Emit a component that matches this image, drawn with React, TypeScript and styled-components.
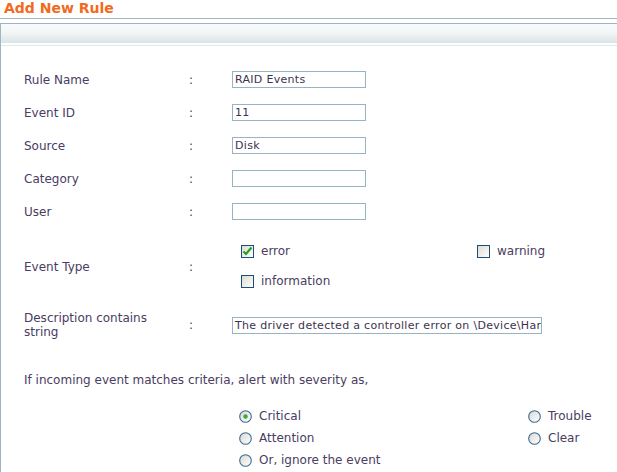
import React from "react";
import styled, { createGlobalStyle } from "styled-components";

const Global = createGlobalStyle`
  html, body { margin: 0; padding: 0; background: #ffffff; }
  body { font-family: "DejaVu Sans", Verdana, sans-serif; color: #4a3c62; }
  * { box-sizing: border-box; }
`;

const Page = styled.div`
  width: 617px;
  height: 472px;
  overflow: hidden;
  background: #fff;
`;

const Title = styled.h1`
  margin: 0;
  height: 19px;
  padding: 0 0 0 4px;
  font-size: 14px;
  line-height: 17px;
  font-weight: bold;
  color: #f26a21;
  border-bottom: 1px solid #a2b6c2;
`;

const Panel = styled.div`
  margin-top: 4px;
  border-top: 1px solid #9db5c5;
  border-left: 1px solid #9db5c5;
  min-height: 460px;
`;

const PanelHeader = styled.div`
  height: 22px;
  background: linear-gradient(#f8fafb 0%, #f3f6f7 40%, #d6e0e4 100%);
  border-bottom: 1px solid #dfe7ea;
  box-shadow: inset 0 -2px 0 #ffffff;
`;

const Form = styled.div`
  padding: 17px 0 0 23px;
`;

const Row = styled.div<{ $h: number }>`
  display: grid;
  grid-template-columns: 165px 43px 1fr;
  align-items: center;
  height: ${(p) => p.$h}px;
  font-size: 12px;
  line-height: 14px;
`;

const Label = styled.div<{ $shift?: number }>`
  width: 150px;
  padding-top: ${(p) => p.$shift ?? 0}px;
`;

const Colon = styled.div<{ $shift?: number }>`
  padding-top: ${(p) => p.$shift ?? 0}px;
`;

const TextInput = styled.div<{ $w: number }>`
  width: ${(p) => p.$w}px;
  height: 17px;
  border: 1px solid #98b3c1;
  padding: 0 0 0 2px;
  font-size: 11px;
  letter-spacing: 0.3px;
  line-height: 15px;
  color: #3c3350;
  white-space: nowrap;
  overflow: hidden;
  background: #fff;
`;

const CheckGrid = styled.div`
  display: grid;
  grid-template-columns: 236px auto;
  grid-auto-rows: 30px;
  align-items: center;
  padding: 8px 0 1px 9px;
`;

const OptionItem = styled.div`
  display: flex;
  align-items: center;
  gap: 7px;
  font-size: 12px;
`;

const Box = styled.span`
  display: inline-flex;
  width: 13px;
  height: 13px;
  border: 1px solid #1f4c78;
  background: linear-gradient(135deg, #dcdcd6 0%, #f4f4f0 70%, #ffffff 100%);
  align-items: center;
  justify-content: center;
`;

const Prompt = styled.div`
  font-size: 12px;
  line-height: 14px;
  padding: 20px 0 0 0;
  height: 52px;
`;

const RadioGrid = styled.div`
  display: grid;
  grid-template-columns: 289px auto;
  grid-auto-rows: 22px;
  align-items: center;
  padding-left: 215px;
`;

const RadioItem = styled.div`
  display: flex;
  align-items: center;
  gap: 7px;
  font-size: 12px;
`;

const Checkbox = ({ checked }: { checked?: boolean }) => (
  <Box>
    {checked && (
      <svg width="11" height="11" viewBox="0 0 11 11">
        <path d="M1.5 5.5 L4 8 L9.5 1.5" stroke="#22a022" strokeWidth="2.2" fill="none" />
      </svg>
    )}
  </Box>
);

const Radio = ({ checked }: { checked?: boolean }) => (
  <svg width="13" height="13" viewBox="0 0 13 13">
    <defs>
      <linearGradient id="rg" x1="0" y1="0" x2="1" y2="1">
        <stop offset="0" stopColor="#d8d8d4" />
        <stop offset="1" stopColor="#ffffff" />
      </linearGradient>
    </defs>
    <circle cx="6.5" cy="6.5" r="5.8" fill="url(#rg)" stroke="#3d6a91" strokeWidth="1.1" />
    {checked && <circle cx="6.5" cy="6.5" r="2.2" fill="#2fae3a" />}
  </svg>
);

const fields: { label: string; value: string }[] = [
  { label: "Rule Name", value: "RAID Events" },
  { label: "Event ID", value: "11" },
  { label: "Source", value: "Disk" },
  { label: "Category", value: "" },
  { label: "User", value: "" },
];

export default function App() {
  return (
    <Page>
      <Global />
      <Title>Add New Rule</Title>
      <Panel>
        <PanelHeader />
        <Form>
          {fields.map((f) => (
            <Row $h={33} key={f.label}>
              <Label>{f.label}</Label>
              <Colon>:</Colon>
              <TextInput $w={134}>{f.value}</TextInput>
            </Row>
          ))}
          <Row $h={69}>
            <Label $shift={8}>Event Type</Label>
            <Colon $shift={8}>:</Colon>
            <CheckGrid>
              <OptionItem>
                <Checkbox checked />
                error
              </OptionItem>
              <OptionItem>
                <Checkbox />
                warning
              </OptionItem>
              <OptionItem>
                <Checkbox />
                information
              </OptionItem>
            </CheckGrid>
          </Row>
          <Row $h={56}>
            <Label>Description contains string</Label>
            <Colon>:</Colon>
            <TextInput $w={310}>
              The driver detected a controller error on \Device\Harddisk0
            </TextInput>
          </Row>
          <Prompt>If incoming event matches criteria, alert with severity as,</Prompt>
          <RadioGrid>
            <RadioItem>
              <Radio checked />
              Critical
            </RadioItem>
            <RadioItem>
              <Radio />
              Trouble
            </RadioItem>
            <RadioItem>
              <Radio />
              Attention
            </RadioItem>
            <RadioItem>
              <Radio />
              Clear
            </RadioItem>
            <RadioItem>
              <Radio />
              Or, ignore the event
            </RadioItem>
          </RadioGrid>
        </Form>
      </Panel>
    </Page>
  );
}
